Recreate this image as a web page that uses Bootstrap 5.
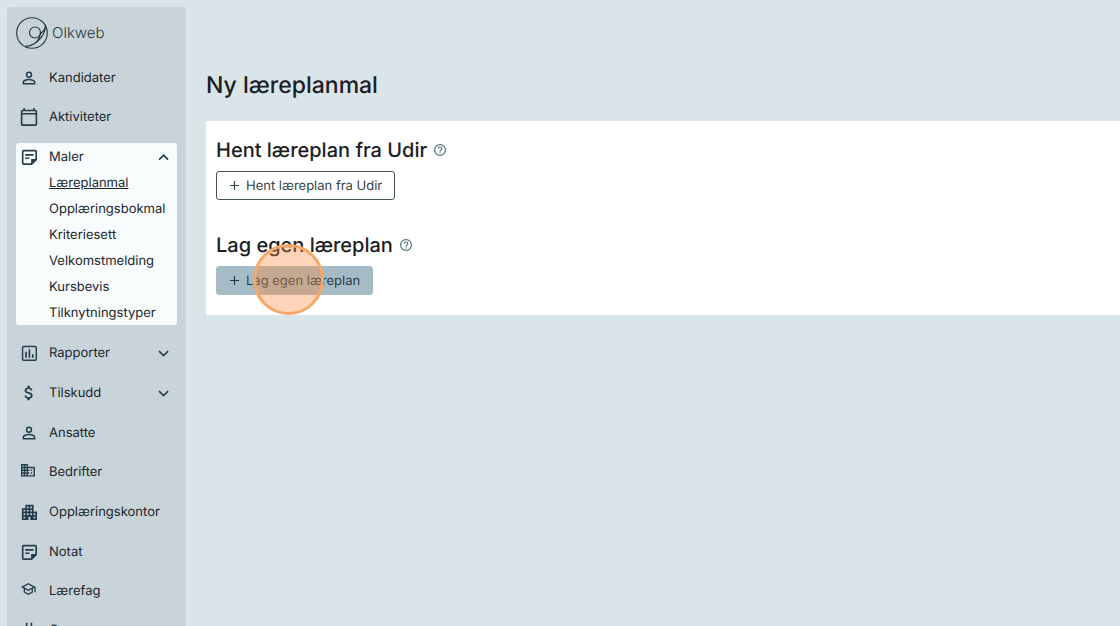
<!DOCTYPE html>
<html lang="nb">
<head>
<meta charset="utf-8">
<meta name="viewport" content="width=device-width, initial-scale=1">
<title>Ny læreplanmal – Olkweb</title>
<link href="https://cdn.jsdelivr.net/npm/bootstrap@5.3.0/dist/css/bootstrap.min.css" rel="stylesheet">
<style>
  body { background: #dae5ea; color: #1b2023; font-family: Inter, sans-serif; font-size: 13px; line-height: 20px; text-rendering: geometricPrecision; }
  .app { height: 100vh; overflow: hidden; }
  .sidebar { width: 179px; margin: 7px 0 0 7px; padding: 0 9px; background: #c8d4da; border-radius: 4px 4px 0 0; }
  .brand { height: 51px; color: #2c383e; font-size: 15px; font-weight: 300; gap: 4px; }
  .menu-item { height: 39px; padding: 1px 5px 0; gap: 12px; color: #20272b; flex-shrink: 0; }
  .menu-item.tall { height: 40px; }
  .menu-item svg { width: 16px; height: 16px; fill: #263e4b; flex-shrink: 0; }
  .menu-item .large-icon { width: 18px; height: 18px; margin: 0 -1px; }
  .open-group { background: #f8fcfd; border-radius: 3px; margin: 7px 0; }
  .open-group .menu-item { height: 26px; }
  .sub-item { height: 26px; padding: 4px 0 2px 33px; color: #20272b; }
  .content { padding: 70px 0 0 20px; }
  .page-title { font-size: 23px; line-height: 30px; font-weight: 450; margin-bottom: 21px; }
  .panel { background: #fff; padding: 15px 10px 20px; }
  .panel-section + .panel-section { margin-top: 31px; }
  .section-head { gap: 7px; margin-bottom: 7px; }
  .section-title { font-size: 20px; line-height: 28px; font-weight: 450; margin: 0; }
  .help { color: #55707c; line-height: 0; }
  .action { height: 29px; padding: 0 12px; font-size: 13px; line-height: 20px; border-radius: 3px; color: #34434c; gap: 5px; text-rendering: inherit; }
  .action-outline, .action-outline:hover { border: 1px solid #45545c; background: #fff; color: #34434c; }
  .action-filled, .action-filled:hover { border: 1px solid #a5bcc6; background: #a5bcc6; color: #263e4b; }
  .click-marker { left: 37px; top: -22px; width: 71px; height: 71px; border: 3px solid #f7a869; background: rgba(255, 137, 59, .36); pointer-events: none; }
</style>
</head>
<body>
<svg class="d-none" aria-hidden="true">
  <symbol id="person" viewBox="2 2 20 20"><path d="M12 5.900a2.100 2.100 0 1 1 0 4.200 2.100 2.100 0 0 1 0-4.200m0 9c2.970 0 6.100 1.460 6.100 2.100v1.100H5.900V17c0-.64 3.130-2.100 6.100-2.100M12 4a4 4 0 1 0 0 8 4 4 0 0 0 0-8m0 9c-2.670 0-8 1.340-8 4v3h16v-3c0-2.660-5.330-4-8-4"/></symbol>
  <symbol id="calendar" viewBox="1 1 22 22"><path d="M20 3h-1V1h-2v2H7V1H5v2H4a2 2 0 0 0-2 2v16c0 1.100.9 2 2 2h16a2 2 0 0 0 2-2V5a2 2 0 0 0-2-2m0 18H4V9h16zm0-14H4V5h16z"/></symbol>
  <symbol id="note" viewBox="2 2 19 19"><path d="M19 5v9h-5v5H5V5zm0-2H5a2 2 0 0 0-2 2v14c0 1.100.9 2 2 2h10l6-6V5a2 2 0 0 0-2-2m-7 11H7v-2h5zm5-4H7V8h10z"/></symbol>
  <symbol id="chart" viewBox="2 2 19 19"><path d="M19 3H5a2 2 0 0 0-2 2v14c0 1.100.9 2 2 2h14a2 2 0 0 0 2-2V5a2 2 0 0 0-2-2m.300 16.300H4.700V4.700H19.300zM7 10h2v7H7zm4-3h2v10h-2zm4 6h2v4h-2z"/></symbol>
  <symbol id="dollar" viewBox="2 2 20 20"><path d="M11.800 10.900c-2.270-.59-3-1.200-3-2.150 0-1.090 1.010-1.850 2.700-1.850 1.780 0 2.440.85 2.500 2.100h2.210c-.07-1.720-1.120-3.300-3.210-3.810V3h-3v2.160c-1.940.42-3.500 1.680-3.500 3.610 0 2.310 1.910 3.460 4.700 4.130 2.500.6 3 1.480 3 2.410 0 .69-.49 1.790-2.700 1.790-2.060 0-2.870-.92-2.980-2.100h-2.200c.12 2.190 1.760 3.420 3.680 3.830V21h3v-2.150c1.950-.37 3.500-1.500 3.500-3.550 0-2.840-2.430-3.810-4.700-4.400"/></symbol>
  <symbol id="business" viewBox="2 3 23 23"><path d="M12 7V3H2v18h20V7zM6 19H4v-2h2zm0-4H4v-2h2zm0-4H4V9h2zm0-4H4V5h2zm4 12H8v-2h2zm0-4H8v-2h2zm0-4H8V9h2zm0-4H8V5h2zm10 12h-8v-2h2v-2h-2v-2h2v-2h-2V9h8zm-2-8h-2v2h2zm0 4h-2v2h2z"/></symbol>
  <symbol id="apartment" viewBox="2 2 19 19"><path d="M17 11V3H7v4H3v14h8v-4h2v4h8V11zM7 19H5v-2h2zm0-4H5v-2h2zm0-4H5V9h2zm4 4H9v-2h2zm0-4H9V9h2zm0-4H9V5h2zm4 8h-2v-2h2zm0-4h-2V9h2zm0-4h-2V5h2zm4 12h-2v-2h2zm0-4h-2v-2h2z"/></symbol>
  <symbol id="school" viewBox="1 3 24 24"><path d="M12 3 1 9l4 2.180v6L12 21l7-3.820v-6l2-1.090V17h2V9zm6.820 6L12 12.720 5.180 9 12 5.280zM17 16l-5 2.720L7 16v-3.730L12 15l5-2.730z"/></symbol>
  <symbol id="hash" viewBox="2 3 20 20"><path d="M20 10V8h-4V4h-2v4h-4V4H8v4H4v2h4v4H4v2h4v4h2v-4h4v4h2v-4h4v-2h-4v-4zm-6 4h-4v-4h4z"/></symbol>
  <symbol id="down" viewBox="3 2 19 19"><path d="M7.410 8.590 12 13.170l4.590-4.580L18 10l-6 6-6-6z"/></symbol>
  <symbol id="up" viewBox="3 2 19 19"><path d="m7.410 15.410 4.590-4.580 4.590 4.580L18 14l-6-6-6 6z"/></symbol>
  <symbol id="plus" viewBox="0 0 12 12"><path d="M5.500 1v9M1 5.500h9" fill="none" stroke="currentColor" stroke-width="1.200"/></symbol>
  <symbol id="question" viewBox="2 2 20 20"><path fill="currentColor" d="M11 18h2v-2h-2zm1-16a10 10 0 1 0 0 20 10 10 0 0 0 0-20m0 18a8 8 0 1 1 0-16 8 8 0 0 1 0 16m0-14a4 4 0 0 0-4 4h2a2 2 0 1 1 4 0c0 2-3 1.750-3 5h2c0-2.250 3-2.500 3-5a4 4 0 0 0-4-4"/></symbol>
</svg>

<div class="app d-flex">
  <nav class="sidebar d-flex flex-column flex-shrink-0" aria-label="Hovedmeny">
    <a href="#" class="brand d-flex align-items-center text-decoration-none flex-shrink-0">
      <svg width="32" height="32" viewBox="0 0 32 32" fill="none" stroke="#26343b" stroke-width="1.100" aria-hidden="true">
        <circle cx="16" cy="16" r="15.300"/>
        <circle cx="19" cy="15.500" r="5.500"/>
        <path d="M29.300 7.500c.5 4-2.300 7.500-5 9.500M24.500 15.500c-.3 6.500-5.500 14-15.500 13.800M29.600 9c-.6 9-8.600 20-20.600 20.300"/>
      </svg>
      <span>Olkweb</span>
    </a>
    <a href="#" class="menu-item d-flex align-items-center text-decoration-none"><svg><use href="#person"/></svg>Kandidater</a>
    <a href="#" class="menu-item d-flex align-items-center text-decoration-none"><svg class="large-icon"><use href="#calendar"/></svg>Aktiviteter</a>
    <div class="open-group flex-shrink-0">
      <a href="#" class="menu-item d-flex align-items-center text-decoration-none" aria-expanded="true"><svg><use href="#note"/></svg>Maler<svg class="ms-auto"><use href="#up"/></svg></a>
      <a href="#" class="sub-item d-block" aria-current="page">Læreplanmal</a>
      <a href="#" class="sub-item d-block text-decoration-none">Opplæringsbokmal</a>
      <a href="#" class="sub-item d-block text-decoration-none">Kriteriesett</a>
      <a href="#" class="sub-item d-block text-decoration-none">Velkomstmelding</a>
      <a href="#" class="sub-item d-block text-decoration-none">Kursbevis</a>
      <a href="#" class="sub-item d-block text-decoration-none">Tilknytningstyper</a>
    </div>
    <a href="#" class="menu-item tall d-flex align-items-center text-decoration-none" aria-expanded="false"><svg><use href="#chart"/></svg>Rapporter<svg class="ms-auto"><use href="#down"/></svg></a>
    <a href="#" class="menu-item tall d-flex align-items-center text-decoration-none" aria-expanded="false"><svg><use href="#dollar"/></svg>Tilskudd<svg class="ms-auto"><use href="#down"/></svg></a>
    <a href="#" class="menu-item tall d-flex align-items-center text-decoration-none"><svg><use href="#person"/></svg>Ansatte</a>
    <a href="#" class="menu-item d-flex align-items-center text-decoration-none"><svg><use href="#business"/></svg>Bedrifter</a>
    <a href="#" class="menu-item tall d-flex align-items-center text-decoration-none"><svg><use href="#apartment"/></svg>Opplæringskontor</a>
    <a href="#" class="menu-item tall d-flex align-items-center text-decoration-none"><svg><use href="#note"/></svg>Notat</a>
    <a href="#" class="menu-item d-flex align-items-center text-decoration-none"><svg><use href="#school"/></svg>Lærefag</a>
    <a href="#" class="menu-item d-flex align-items-center text-decoration-none"><svg><use href="#hash"/></svg>Grupper</a>
  </nav>

  <main class="content flex-grow-1">
    <h1 class="page-title">Ny læreplanmal</h1>
    <div class="panel">
      <section class="panel-section">
        <div class="section-head d-flex align-items-center">
          <h2 class="section-title">Hent læreplan fra Udir</h2>
          <button type="button" class="help btn p-0 border-0 d-flex" aria-label="Hjelp"><svg width="12" height="12"><use href="#question"/></svg></button>
        </div>
        <div class="d-flex">
          <button type="button" class="action action-outline btn d-inline-flex align-items-center"><svg width="12" height="12"><use href="#plus"/></svg>Hent læreplan fra Udir</button>
        </div>
      </section>
      <section class="panel-section">
        <div class="section-head d-flex align-items-center">
          <h2 class="section-title">Lag egen læreplan</h2>
          <button type="button" class="help btn p-0 border-0 d-flex" aria-label="Hjelp"><svg width="12" height="12"><use href="#question"/></svg></button>
        </div>
        <div class="position-relative d-flex">
          <button type="button" class="action action-filled btn d-inline-flex align-items-center"><svg width="12" height="12"><use href="#plus"/></svg>Lag egen læreplan</button>
          <span class="click-marker position-absolute rounded-circle"></span>
        </div>
      </section>
    </div>
  </main>
</div>
<script src="https://cdn.jsdelivr.net/npm/bootstrap@5.3.0/dist/js/bootstrap.bundle.min.js"></script>
</body>
</html>
